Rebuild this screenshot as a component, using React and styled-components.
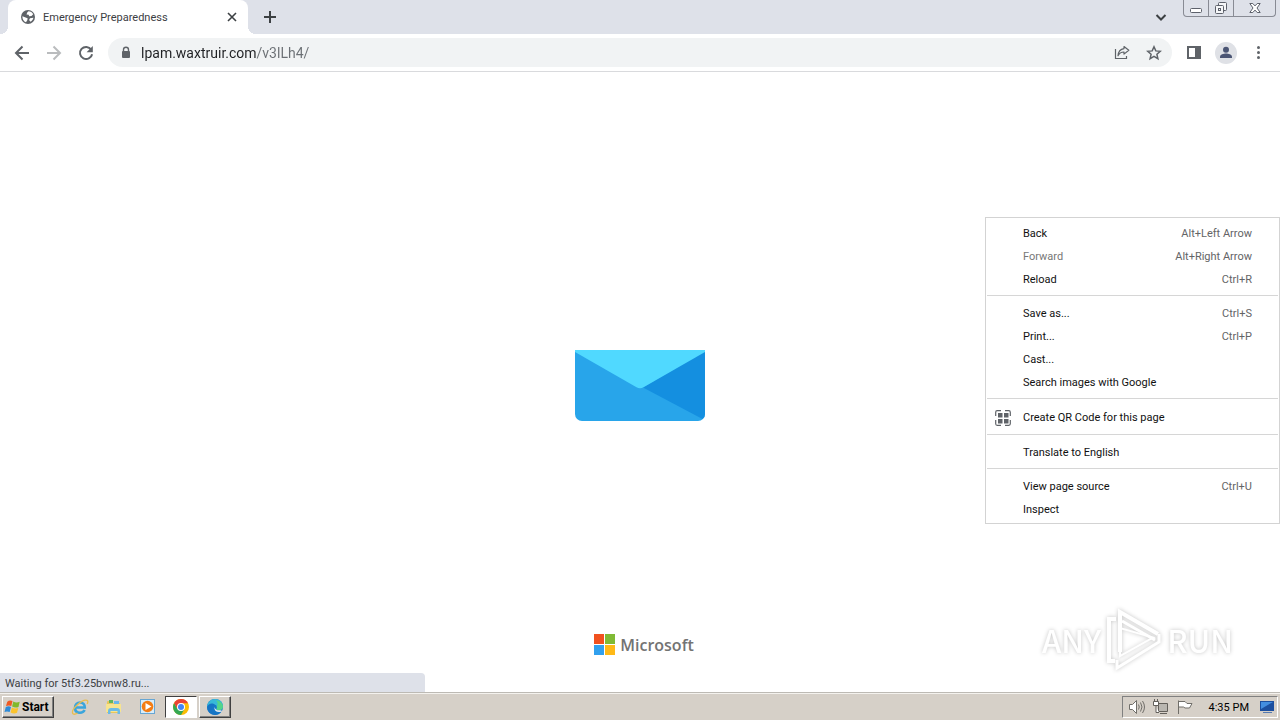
import React from "react";
import styled, { createGlobalStyle, css } from "styled-components";

const GlobalStyle = createGlobalStyle`
  *, *::before, *::after { box-sizing: border-box; }
  body {
    margin: 0;
    background: #fff;
    color: #202124;
    font: 11px/14px Tahoma, Roboto, sans-serif;
  }
  button, input { font: inherit; color: inherit; }
`;

const Screen = styled.div`
  position: relative;
  display: flex;
  flex-direction: column;
  min-height: 100vh;
  overflow: hidden;
`;

const Spacer = styled.div`
  flex: 1;
`;

const IconButton = styled.button`
  display: flex;
  align-items: center;
  justify-content: center;
  flex: none;
  width: ${(p) => p.$size || 32}px;
  height: ${(p) => p.$size || 32}px;
  padding: 0;
  border: 0;
  border-radius: 50%;
  background: transparent;
  svg { display: block; flex: none; }
`;

/* ---- tab strip ---- */

const TabStrip = styled.header`
  display: flex;
  align-items: center;
  height: 34px;
  padding-left: 8px;
  background: #dee1e9;
`;

const Tab = styled.div`
  position: relative;
  display: flex;
  align-items: center;
  width: 240px;
  height: 34px;
  padding: 0 8px 0 12px;
  gap: 7px;
  border-radius: 8px 8px 0 0;
  background: #fff;
  &::before, &::after {
    content: "";
    position: absolute;
    bottom: 0;
    width: 8px;
    height: 8px;
  }
  &::before {
    left: -8px;
    background: radial-gradient(circle at 0 0, transparent 8px, #fff 8px);
  }
  &::after {
    right: -8px;
    background: radial-gradient(circle at 100% 0, transparent 8px, #fff 8px);
  }
`;

const TabTitle = styled.span`
  flex: 1;
  padding-top: 2px;
  color: #3c4043;
`;

const NewTab = styled(IconButton)`
  margin-left: 8px;
`;

const WindowControls = styled.div`
  display: flex;
  align-self: flex-start;
  height: 17px;
  margin: 0 4px 0 8px;
  border: 1px solid #888b94;
  border-top: 0;
  border-radius: 0 0 4px 4px;
`;

const WindowButton = styled.button`
  display: flex;
  align-items: center;
  justify-content: center;
  width: ${(p) => p.$width}px;
  padding: 0;
  border: 0;
  background: transparent;
  & + & { border-left: 1px solid #888b94; }
`;

/* ---- toolbar ---- */

const Toolbar = styled.nav`
  display: flex;
  align-items: center;
  height: 38px;
  padding: 0 6px;
  border-bottom: 1px solid #d9dadd;
  background: #fff;
`;

const Omnibox = styled.div`
  display: flex;
  align-items: center;
  flex: 1;
  height: 29px;
  margin: 0 6px;
  padding: 0 2px 0 12px;
  border-radius: 15px;
  background: #f1f3f4;
`;

const UrlInput = styled.input`
  flex: 1;
  min-width: 0;
  height: 24px;
  margin-left: 9px;
  padding: 0;
  border: 0;
  outline: 0;
  color: transparent;
  background: linear-gradient(90deg, #202124 115px, #6b6f74 115px);
  background-clip: text;
  font: 14px/20px Tahoma, Roboto, sans-serif;
`;

const Avatar = styled.span`
  display: flex;
  width: 22px;
  height: 22px;
  border-radius: 50%;
  background: #dfe1e6;
`;

/* ---- page ---- */

const Page = styled.main`
  position: relative;
  display: flex;
  flex: 1;
  flex-direction: column;
  align-items: center;
  justify-content: flex-end;
  padding-bottom: 36px;
`;

const Envelope = styled.svg`
  display: block;
  margin: auto auto 213px;
`;

const Microsoft = styled.div`
  display: flex;
  align-items: center;
  gap: 5px;
  height: 22px;
  padding-left: 8px;
  color: #737373;
  font: 600 16px/22px "Segoe UI", "Open Sans", sans-serif;
`;

const Watermark = styled.div`
  position: absolute;
  right: 47px;
  bottom: 18px;
  display: flex;
  align-items: center;
  gap: 4px;
  color: #fff;
  font: 500 31px/68px "Noto Sans CJK SC", sans-serif;
  filter: drop-shadow(0 0 2px #c4c4c4);
  svg { display: block; }
`;

const Status = styled.div`
  position: absolute;
  left: 0;
  bottom: 0;
  width: 425px;
  height: 19px;
  padding: 4px 5px 0;
  border-top-right-radius: 4px;
  background: #dee1e9;
  color: #3c4043;
`;

/* ---- context menu ---- */

const Menu = styled.div`
  position: absolute;
  top: 217px;
  right: 0;
  width: 295px;
  padding: 4px 1px 2px;
  border: 1px solid #d3d3d3;
  background: #fff;
`;

const MenuItem = styled.button`
  display: flex;
  align-items: center;
  width: 100%;
  height: ${(p) => (p.$tall ? 25 : 23)}px;
  padding: 0 26px 0 8px;
  border: 0;
  background: transparent;
  text-align: left;
  color: #111;
  &:disabled { color: #777; }
`;

const MenuIcon = styled.span`
  display: flex;
  width: 28px;
`;

const Shortcut = styled.span`
  margin-left: auto;
  color: #636466;
`;

const Divider = styled.hr`
  height: 1px;
  margin: 4px 0 6px;
  border: 0;
  background: #d6d6d6;
`;

/* ---- taskbar ---- */

const Taskbar = styled.footer`
  display: flex;
  align-items: center;
  height: 28px;
  padding: 1px 2px 0;
  border-top: 1px solid #bdbab4;
  background: #d6d0c8;
  box-shadow: inset 0 1px #f4f2ee;
  color: #000;
`;

const raised = css`
  border: 1px solid;
  border-color: #fff #404040 #404040 #fff;
  box-shadow: inset -1px -1px #808080;
`;

const StartButton = styled.button`
  display: flex;
  align-items: center;
  gap: 1px;
  width: 52px;
  height: 22px;
  margin-right: 9px;
  padding: 0 1px;
  background: #d6d0c8;
  font: bold 12px/16px Tahoma, Roboto, sans-serif;
  ${raised}
  svg { flex: none; }
`;

const TaskButton = styled.button`
  display: flex;
  align-items: center;
  justify-content: center;
  width: ${(p) => (p.$state ? 32 : 34)}px;
  height: 22px;
  margin-right: ${(p) => (p.$state ? 2 : 0)}px;
  padding: 0;
  border: 0;
  background: transparent;
  ${(p) => p.$state === "open" && raised}
  ${(p) =>
    p.$state === "active" &&
    css`
      border: 1px solid;
      border-color: #404040 #fff #fff #404040;
      background: #fff;
    `}
`;

const Tray = styled.div`
  display: flex;
  align-items: center;
  gap: 8px;
  height: 22px;
  padding: 0 2px 0 6px;
  border: 1px solid;
  border-color: #808080 #fff #fff #808080;
  svg { display: block; }
`;

const Clock = styled.time`
  margin: 0 2px 0 8px;
  padding-top: 1px;
`;

/* ---- drawings ---- */

const Globe = () => (
  <svg width="16" height="16" viewBox="0 0 16 16">
    <circle cx="8" cy="8" r="7" fill="#5f6368" />
    <path d="M2.400 7.200 5.600 8.500 7.600 9.200 7.400 11 6 13.300C3.800 12.400 2.200 10 2.400 7.200zM8.500 2.200c2 0 3.800 1.300 4.700 3L11.500 7 9.200 7.200 8.600 5.700 6.500 5.400 7.200 3.600zM10 9.200l3.400-.4c-.3 1.700-1.400 3.200-2.900 4l-1.400-1.700z" fill="#fff" />
  </svg>
);

const Line = ({ d, size = 16, color = "#5f6368", width = 2, ...rest }) => (
  <svg width={size} height={size} viewBox={`0 0 ${size} ${size}`} fill="none" stroke={color} strokeWidth={width} {...rest}>
    <path d={d} />
  </svg>
);

const Reload = () => (
  <svg width="16" height="16" viewBox="0 0 16 16">
    <path d="M13.200 4.600A6.100 6.100 0 1 0 14.100 9.200" fill="none" stroke="#5f6368" strokeWidth="2" />
    <path d="M14.800 1v6.200H8.600z" fill="#5f6368" />
  </svg>
);

const Lock = () => (
  <svg width="12" height="14" viewBox="0 0 12 14">
    <path d="M3.500 6V3.800a2.500 2.500 0 0 1 5 0V6" fill="none" stroke="#5f6368" strokeWidth="1.400" />
    <rect x="2" y="5" width="8" height="7" rx="1" fill="#5f6368" />
  </svg>
);

const Share = () => (
  <svg width="16" height="16" viewBox="0 0 16 16" fill="none" stroke="#5f6368" strokeWidth="1.200">
    <path d="M1.500 4v9.500h11V11" />
    <path d="M10 1.500 14.800 5.300 10 9.100V7C7.200 7 5.300 8.300 4 10.800 4.300 6.800 6.300 4.100 10 3.600z" strokeLinejoin="round" />
  </svg>
);

const Star = () => (
  <svg width="16" height="16" viewBox="0 0 16 16">
    <path d="m8 1.800 1.800 4.100 4.500.4-3.400 3 1 4.400L8 11.400l-3.900 2.300 1-4.400-3.400-3 4.500-.4z" fill="none" stroke="#5f6368" strokeWidth="1.500" />
  </svg>
);

const SidePanel = () => (
  <svg width="16" height="16" viewBox="0 0 16 16">
    <path fillRule="evenodd" d="M1 1h14v13H1zM3 3v9h6V3z" fill="#5f6368" />
  </svg>
);

const Person = () => (
  <svg width="22" height="22" viewBox="0 0 22 22" fill="#4b5574">
    <circle cx="11" cy="7.800" r="3" />
    <path d="M5 16v-1.200c0-2.200 3.600-3.200 6-3.200s6 1 6 3.200V16z" />
  </svg>
);

const Dots = () => (
  <svg width="16" height="16" viewBox="0 0 16 16" fill="#5f6368">
    <circle cx="8.500" cy="2.500" r="1.500" />
    <circle cx="8.500" cy="7.500" r="1.500" />
    <circle cx="8.500" cy="12.500" r="1.500" />
  </svg>
);

const Minimize = () => (
  <svg width="12" height="16" viewBox="0 0 12 16">
    <rect x=".5" y="8.500" width="11" height="4" rx="1" fill="#fff" stroke="#5d616b" />
  </svg>
);

const Restore = () => (
  <svg width="14" height="16" viewBox="0 0 14 16" fill="#f5f6f8" stroke="#5d616b">
    <rect x="4.500" y="2.500" width="8" height="8" rx="1" />
    <rect x="1.500" y="5.500" width="8" height="8" rx="1" />
    <rect x="4.500" y="8.500" width="2" height="2" />
  </svg>
);

const CloseWindow = () => (
  <svg width="12" height="16" viewBox="0 0 12 16">
    <path d="M.8 3.500h3L6 5.900l2.200-2.400h3L8 8l3.200 4.500h-3L6 10.100l-2.200 2.400h-3L4 8z" fill="#fff" stroke="#5d616b" />
  </svg>
);

const QrCode = () => (
  <svg width="16" height="16" viewBox="0 0 16 16">
    <path d="M6 .7H2.200Q.7.7.7 2.200V6M10 .7h3.800q1.500 0 1.500 1.500V6M6 15.300H2.200q-1.500 0-1.500-1.500V10M10 15.300h3.800q1.500 0 1.500-1.500V10" fill="none" stroke="#5f6368" strokeWidth="1.200" />
    <path d="M3 3h4.500v4.500H3zM9 3h4.500v4.500H9zM3 9h4.500v4.500H3zM9 9h4.500v4.500H9z" fill="#5f6368" />
  </svg>
);

const EnvelopeLogo = () => (
  <Envelope width="130" height="71" viewBox="0 0 130 71">
    <path d="M0 1h130v63a7 7 0 0 1-7 7H7a7 7 0 0 1-7-7z" fill="#28a5ea" />
    <path d="M130 1v63q0 3-2.500 5L68 37.500z" fill="#148fe0" />
    <path d="M0 0h130v2L68.500 37.200q-3.500 2-7 0L0 2z" fill="#50d9ff" />
  </Envelope>
);

const MicrosoftSquares = () => (
  <svg width="21" height="22" viewBox="0 0 21 22">
    <path d="M0 0h10v10H0z" fill="#f1511f" />
    <path d="M11 0h10v10H11z" fill="#80ba35" />
    <path d="M0 11h10v10H0z" fill="#31a0ee" />
    <path d="M11 11h10v10H11z" fill="#ffb917" />
  </svg>
);

const Play = () => (
  <svg width="58" height="68" viewBox="0 0 58 68" fill="none" stroke="#fff" strokeWidth="4">
    <path d="M15 46V6l38 22" />
    <path d="M11 13H4v42h6" />
    <path d="M15 22v28l33-18.500z" strokeWidth="2" />
    <path d="m17 15 33 19" strokeWidth="3" />
    <path d="M12 54v8l42-26v-8" strokeWidth="3" />
  </svg>
);

const WindowsFlag = () => (
  <svg width="17" height="16" viewBox="0 0 17 16">
    <path d="M3.300 2.700Q5.500.8 8.500 2L7.300 7Q5 5.800 2 7z" fill="#ef5a24" />
    <path d="M9.300 2.600q3 1.600 6.400.2L14.500 8q-3.200 1.300-6.400-.5z" fill="#81b92c" />
    <path d="M1.800 8Q4.700 6.700 7 8l-1.300 5Q3 11.800.5 13z" fill="#2e8bd8" />
    <path d="M7.900 8.500q3.100 1.700 6.400.5L13 13.800q-3.300 1.400-6.400-.4z" fill="#fbc32c" />
  </svg>
);

const InternetExplorer = () => (
  <svg width="18" height="18" viewBox="0 0 18 18" fill="none">
    <path d="M4 9.500h9.800c0-3-1.800-5-4.700-5S4 6.600 4 9.700s2 5 5 5c2.200 0 3.800-1 4.600-2.700" stroke="#3aa5dc" strokeWidth="2.600" />
    <path d="M2 15.800C-1 12 11.500.5 16 2.300c1.300.6.9 2.300.2 3.700M2 15.800c1.200.9 3.400 0 4.500-.8" stroke="#e8bd4f" strokeWidth="1.300" />
  </svg>
);

const Explorer = () => (
  <svg width="18" height="18" viewBox="0 0 18 18">
    <path d="M2 4q0-1 1-1h4l1 2h7v10H2z" fill="#e8c65b" />
    <path d="M4 2h4v3H4z" fill="#5fb65c" />
    <path d="M9 3h5v3H9z" fill="#69b7e9" />
    <path d="M1 6h15v8H1z" fill="#f7e48f" />
    <path d="M3 16v-3q0-3 3-3h6q3 0 3 3v3h-2.500v-3h-7v3z" fill="#6bbbe6" />
  </svg>
);

const MediaPlayer = () => (
  <svg width="18" height="18" viewBox="0 0 18 18">
    <rect x="1.500" y="1.500" width="14" height="14" fill="#d8edfa" stroke="#67a6d3" />
    <circle cx="8.500" cy="8.500" r="5.800" fill="#f47d14" />
    <path d="m6.500 5 6 3.500-6 3.500z" fill="#fff" />
  </svg>
);

const Chrome = () => (
  <svg width="16" height="16" viewBox="0 0 16 16">
    <circle cx="8" cy="8" r="8" fill="#fbbc04" />
    <path d="M1.100 4A8 8 0 0 0 8 16l3.500-6L8 8 4.500 10z" fill="#34a853" />
    <path d="M8 4.200h7A8 8 0 0 0 1.100 4l3.400 6z" fill="#ea4335" />
    <circle cx="8" cy="8" r="4" fill="#fff" />
    <circle cx="8" cy="8" r="3" fill="#4285f4" />
  </svg>
);

const Edge = () => (
  <svg width="16" height="16" viewBox="0 0 16 16">
    <circle cx="8" cy="8" r="8" fill="#1678c8" />
    <path d="M.1 8C.3 3.500 3.800 0 8 0c4.800 0 8 3.300 8 7 0 2.700-2 4.300-4.500 4.300-1.500 0-2.500-.6-2.100-1.200.9-1.400.9-4.600-2.800-4.600-3 0-5.600 1-6.500 2.500z" fill="#38b9d8" />
    <path d="M9 1q6 1.500 7 6 0 4.300-4.500 4.300-2.500-.2-2-1.300.9-1.300.3-2.700 2-3-.8-6.300z" fill="#54d48a" />
    <path d="M.1 8c1-3.500 5.500-4.500 7.900-2.100C5.500 6 4.300 8.500 5.500 11c1.800 3.200 5.500 3.600 8.600 2.100A8 8 0 0 1 .1 8z" fill="#1674c4" />
    <path d="M7.500 8q-.8 5 5 5 1.800 0 2.700-.8-.7-.9-2.200-.9-4.500.5-5.500-3.300z" fill="#e9eef0" />
  </svg>
);

const Speaker = () => (
  <svg width="16" height="16" viewBox="0 0 16 16" fill="none" stroke="#706e69">
    <path d="M.5 5.500h3l4-4v13l-4-4h-3z" fill="#fff" />
    <path d="M9.500 5.500q1.500 2.500 0 5M11.500 3.500q3 4.500 0 9M13.500 2q4 6 0 12" />
  </svg>
);

const Network = () => (
  <svg width="16" height="16" viewBox="0 0 16 16" stroke="#625f5a">
    <path d="M5.500 4.500h9v8h-9z" fill="#b9b6b0" />
    <path d="M7 14.500h7" fill="none" />
    <path d="M.5 2.500h5v4h-5zM1.500 0v2M4.500 0v2M3 7v6.500h3" fill="#fff" />
  </svg>
);

const Flag = () => (
  <svg width="16" height="16" viewBox="0 0 16 16">
    <path d="M1.500 15V1.500M2 2.500h6l2 2h5L12.500 9H8L6.500 8H2" fill="#fff" stroke="#706e69" />
  </svg>
);

const Monitor = () => (
  <svg width="16" height="16" viewBox="0 0 16 16">
    <path d="M1 2h14v10H1z" fill="#1c4f9f" />
    <path d="M2 3h12L2 10z" fill="#438ee0" />
    <path d="M4 13h9v1H4z" fill="#567ab0" />
  </svg>
);

const MENU_GROUPS = [
  [
    { label: "Back", keys: "Alt+Left Arrow" },
    { label: "Forward", keys: "Alt+Right Arrow", disabled: true },
    { label: "Reload", keys: "Ctrl+R" },
  ],
  [
    { label: "Save as...", keys: "Ctrl+S" },
    { label: "Print...", keys: "Ctrl+P" },
    { label: "Cast..." },
    { label: "Search images with Google" },
  ],
  [{ label: "Create QR Code for this page", icon: <QrCode />, tall: true }],
  [{ label: "Translate to English" }],
  [{ label: "View page source", keys: "Ctrl+U" }, { label: "Inspect" }],
];

function ContextMenu() {
  return (
    <Menu role="menu">
      {MENU_GROUPS.map((group, i) => (
        <React.Fragment key={i}>
          {i > 0 && <Divider />}
          {group.map((item) => (
            <MenuItem key={item.label} role="menuitem" disabled={item.disabled} $tall={item.tall}>
              <MenuIcon>{item.icon}</MenuIcon>
              {item.label}
              {item.keys && <Shortcut>{item.keys}</Shortcut>}
            </MenuItem>
          ))}
        </React.Fragment>
      ))}
    </Menu>
  );
}

export default function App() {
  return (
    <Screen>
      <GlobalStyle />
      <TabStrip>
        <Tab>
          <Globe />
          <TabTitle>Emergency Preparedness</TabTitle>
          <IconButton $size={16} aria-label="Close tab">
            <Line d="m4 4 8 8M12 4l-8 8" color="#3c4043" width={1.6} />
          </IconButton>
        </Tab>
        <NewTab $size={28} aria-label="New tab">
          <Line d="M8 2v12M2 8h12" color="#3c4043" />
        </NewTab>
        <Spacer />
        <IconButton $size={28} aria-label="Search tabs">
          <Line d="m3.500 6 4.500 4.500L12.500 6" color="#3c4043" />
        </IconButton>
        <WindowControls>
          <WindowButton $width={24} aria-label="Minimize"><Minimize /></WindowButton>
          <WindowButton $width={25} aria-label="Restore"><Restore /></WindowButton>
          <WindowButton $width={42} aria-label="Close"><CloseWindow /></WindowButton>
        </WindowControls>
      </TabStrip>

      <Toolbar>
        <IconButton aria-label="Back">
          <Line d="M15 8H2M8.500 1.500 2 8l6.500 6.500" />
        </IconButton>
        <IconButton aria-label="Forward">
          <Line d="M1 8h13M7.500 1.500 14 8l-6.500 6.500" color="#babcbe" />
        </IconButton>
        <IconButton aria-label="Reload"><Reload /></IconButton>
        <Omnibox>
          <Lock />
          <UrlInput aria-label="Address" defaultValue="lpam.waxtruir.com/v3lLh4/" />
          <IconButton aria-label="Share"><Share /></IconButton>
          <IconButton aria-label="Bookmark"><Star /></IconButton>
        </Omnibox>
        <IconButton aria-label="Side panel"><SidePanel /></IconButton>
        <IconButton aria-label="Profile"><Avatar><Person /></Avatar></IconButton>
        <IconButton aria-label="Menu"><Dots /></IconButton>
      </Toolbar>

      <Page>
        <EnvelopeLogo />
        <Microsoft>
          <MicrosoftSquares />
          <span>Microsoft</span>
        </Microsoft>
        <Watermark>
          <span>ANY</span>
          <Play />
          <span>RUN</span>
        </Watermark>
        <Status>Waiting for 5tf3.25bvnw8.ru...</Status>
      </Page>

      <Taskbar>
        <StartButton><WindowsFlag />Start</StartButton>
        <TaskButton aria-label="Internet Explorer"><InternetExplorer /></TaskButton>
        <TaskButton aria-label="Explorer"><Explorer /></TaskButton>
        <TaskButton aria-label="Media Player"><MediaPlayer /></TaskButton>
        <TaskButton $state="active" aria-label="Chrome"><Chrome /></TaskButton>
        <TaskButton $state="open" aria-label="Edge"><Edge /></TaskButton>
        <Spacer />
        <Tray>
          <Speaker />
          <Network />
          <Flag />
          <Clock>4:35 PM</Clock>
          <Monitor />
        </Tray>
      </Taskbar>

      <ContextMenu />
    </Screen>
  );
}
